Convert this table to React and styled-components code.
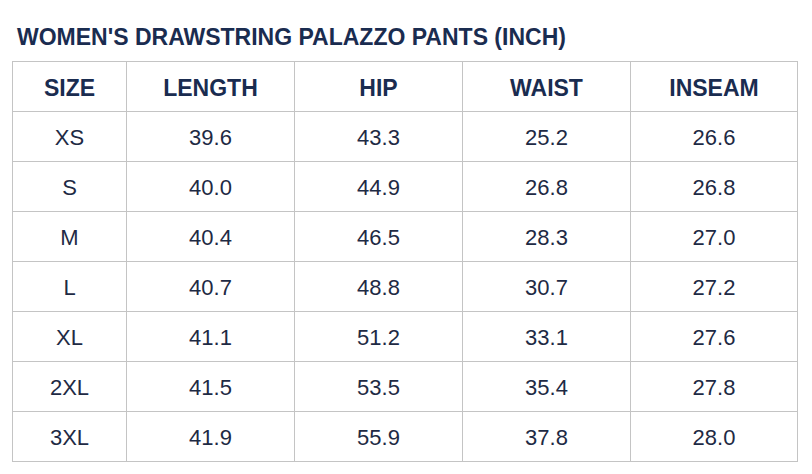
import { styled, createGlobalStyle } from "styled-components";

const rows = [
  ["XS", "39.6", "43.3", "25.2", "26.6"],
  ["S", "40.0", "44.9", "26.8", "26.8"],
  ["M", "40.4", "46.5", "28.3", "27.0"],
  ["L", "40.7", "48.8", "30.7", "27.2"],
  ["XL", "41.1", "51.2", "33.1", "27.6"],
  ["2XL", "41.5", "53.5", "35.4", "27.8"],
  ["3XL", "41.9", "55.9", "37.8", "28.0"],
];

const heads = ["SIZE", "LENGTH", "HIP", "WAIST", "INSEAM"];

function App() {
  return (
    <Page>
      <GlobalStyle />
      <Title>WOMEN'S DRAWSTRING PALAZZO PANTS (INCH)</Title>
      <Chart>
        {heads.map((h) => (
          <Cell key={h} head>
            {h}
          </Cell>
        ))}
        {rows.map((r) =>
          r.map((v, i) => <Cell key={r[0] + i}>{v}</Cell>)
        )}
      </Chart>
    </Page>
  );
}

const GlobalStyle = createGlobalStyle`
body {
  margin:0;
  background:#fff;
  font-family:"Liberation Sans", Arial, sans-serif;
}
`;

const Page = styled.div`
padding:24px 0 0 12px;
`;

const Title = styled.h1`
margin:0 0 11px 0;
padding-left:5px;
font-size:23px;
line-height:26px;
font-weight:700;
color:#1a2c50;
`;

const Chart = styled.div`
display:grid;
grid-template-columns:114px 168px 168px 168px 167px;
grid-auto-rows:50px;
width:max-content;
border-top:1px solid #c4c4c4;
border-left:1px solid #c4c4c4;
`;

const Cell = styled.div`
display:flex;
align-items:center;
justify-content:center;
padding-top:3px;
box-sizing:border-box;
border-right:1px solid #c4c4c4;
border-bottom:1px solid #c4c4c4;
font-size:${(props) => (props.head ? "23px" : "22px")};
font-weight:${(props) => (props.head ? 700 : 400)};
color:${(props) => (props.head ? "#1a2c50" : "#1e2a44")};
`;

export default App;
